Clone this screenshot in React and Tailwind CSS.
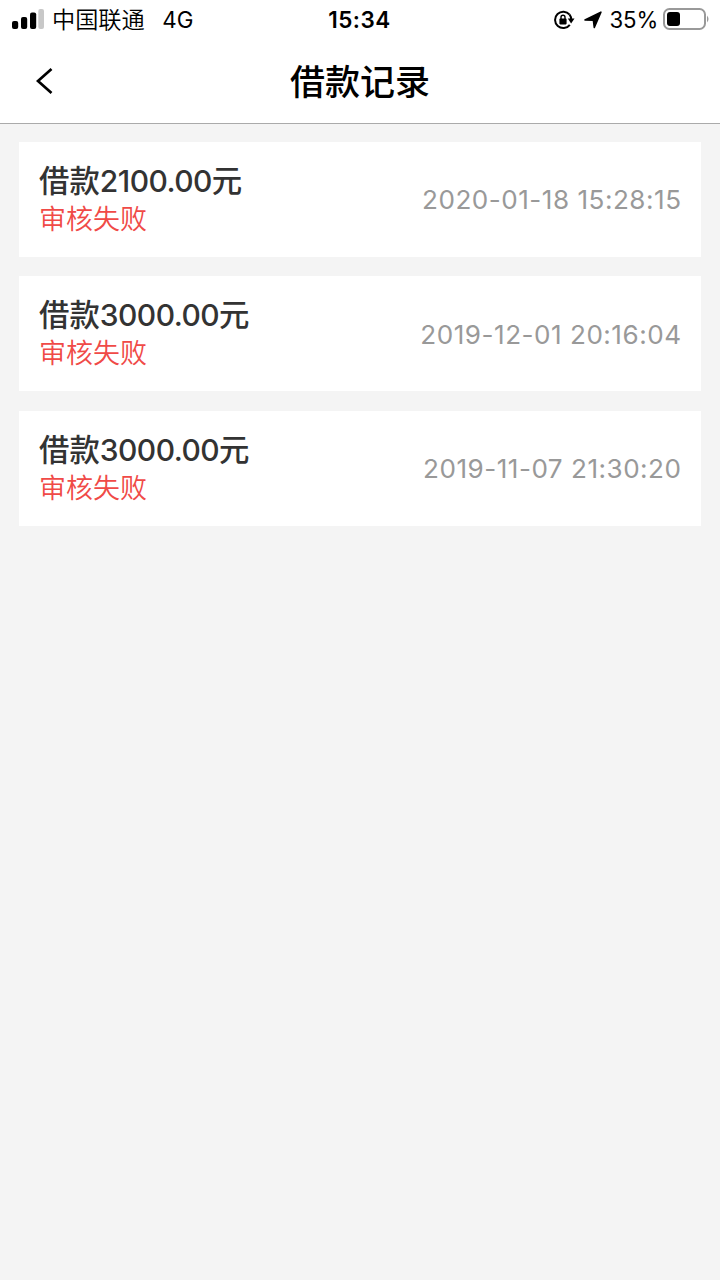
const records = [
  { amount: '2100.00', time: '2020-01-18 15:28:15' },
  { amount: '3000.00', time: '2019-12-01 20:16:04' },
  { amount: '3000.00', time: '2019-11-07 21:30:20' },
];

function StatusBar() {
  return (
    <div className="flex h-10 items-center text-[22px] leading-10">
      <div className="flex w-[240px] items-center pl-3">
        <svg className="-mt-0.5" width="32" height="20" viewBox="0 0 32 20">
          <rect x="0" y="12" width="6.2" height="8" rx="2" />
          <rect x="9" y="8" width="6.2" height="12" rx="2" />
          <rect x="18" y="3.5" width="6.2" height="16.5" rx="2" />
          <rect x="26.3" y="0" width="5.7" height="20" rx="2" fill="#c8c8c8" />
        </svg>
        <span className="ml-2 mt-px text-[23.2px] leading-[39px] font-[350]">中国联通</span>
        <span className="ml-[17.5px] text-[22.4px]">4G</span>
      </div>
      <div className="w-[239px] text-center text-[22.5px] font-semibold tracking-[0.5px]">15:34</div>
      <div className="flex w-[241px] items-center justify-end pr-[11px]">
        <svg width="22" height="20" viewBox="0 0 22 20" fill="none" stroke="black" strokeWidth="2">
          <path d="M16.6 4.7A8.2 8.2 0 1 0 16.8 14.8" />
          <path d="M16.6 4.7Q18.2 6.8 18.2 9.5" />
          <path d="M14.8 8.6h6.7l-3.4 4.8z" fill="black" stroke="none" />
          <rect x="6.4" y="8.6" width="7.2" height="5.8" rx=".8" fill="black" stroke="none" />
          <path d="M8 9V7.2a2 2 0 0 1 4 0V9" strokeWidth="1.4" />
        </svg>
        <svg className="ml-[9px]" width="18" height="18" viewBox="0 0 18 18" stroke="black" strokeWidth="1.6" strokeLinejoin="round"><path d="M16.9 1.2 10.3 16.4 9.4 9.3 1 9z" /></svg>
        <span className="ml-[8px] text-[22.2px] tracking-[-0.2px]">35%</span>
        <svg className="ml-[5px] -mt-0.5" width="46" height="22" viewBox="0 0 46 22">
          <rect x="1" y="1" width="41" height="20" rx="5.5" fill="none" stroke="#999" strokeWidth="2" />
          <rect x="4" y="4" width="13" height="14" rx="3" />
          <path d="M44 7.5q3 3.5 0 7z" fill="#999" />
        </svg>
      </div>
    </div>
  );
}

export default function App() {
  return (
    <div className="min-h-[1280px] bg-[#f4f4f4] font-['Inter','Noto_Sans_CJK_SC',sans-serif] text-black">
      <header className="h-[124px] border-b border-[#aaa] bg-white">
        <StatusBar />
        <div className="flex h-[82px] items-center">
          <button className="w-[120px] pl-[35.5px]" aria-label="返回">
            <svg width="17" height="28" viewBox="0 0 17 28" fill="none" stroke="black" strokeWidth="2.7"><path d="M15.5 2 2 14l13.5 12" /></svg>
          </button>
          <h1 className="w-[480px] pt-px text-center text-[35px] leading-[82px] font-medium">借款记录</h1>
        </div>
      </header>
      <main className="flex flex-col gap-[19.4px] px-[19px] pt-[18px]">
        {records.map((r) => (
          <article key={r.time} className="flex h-[115px] items-center justify-between bg-white px-5">
            <div className="pt-px">
              <h2 className="text-[30.4px] leading-[38px] font-medium text-[#333]">借款<span className="text-[30px] tracking-[-0.55px]">{r.amount}</span>元</h2>
              <p className="pt-px text-[27px] leading-[37px] font-[350] text-[#f04a47]">审核失败</p>
            </div>
            <time className="-mr-[0.5px] pt-px text-[26.1px] tracking-[0.5px] text-[#999]">{r.time}</time>
          </article>
        ))}
      </main>
    </div>
  );
}
